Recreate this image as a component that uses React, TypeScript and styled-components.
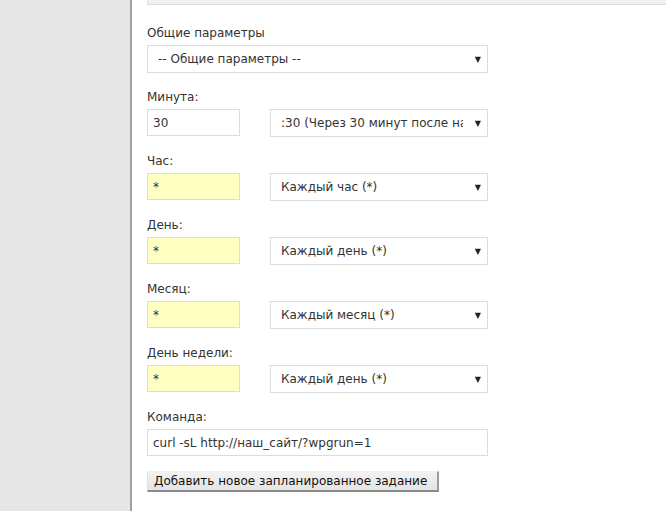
import styled, { createGlobalStyle } from "styled-components";

const GlobalStyle = createGlobalStyle`
  html, body {
    margin: 0;
    padding: 0;
    background: #e6e6e6;
  }
  body {
    font-family: "DejaVu Sans", Verdana, sans-serif;
    font-size: 12px;
    color: #333;
  }
`;

type SelectProps = { value: string; width: number };

function Dropdown({ value, width }: SelectProps) {
  return (
    <SelectWrap $width={width}>
      <NativeSelect defaultValue={value}>
        <option>{value}</option>
      </NativeSelect>
      <Arrow>▼</Arrow>
    </SelectWrap>
  );
}

const rows = [
  { label: "Минута:", value: "30", filled: false, option: ":30 (Через 30 минут после начала часа)" },
  { label: "Час:", value: "*", filled: true, option: "Каждый час (*)" },
  { label: "День:", value: "*", filled: true, option: "Каждый день (*)" },
  { label: "Месяц:", value: "*", filled: true, option: "Каждый месяц (*)" },
  { label: "День недели:", value: "*", filled: true, option: "Каждый день (*)" },
];

export default function App() {
  return (
    <>
      <GlobalStyle />
      <Page>
        <Gutter />
        <Panel>
          <TopBox />
          <Form>
            <Field>
              <Label>Общие параметры</Label>
              <Dropdown value="-- Общие параметры --" width={341} />
            </Field>

            {rows.map((r) => (
              <Field key={r.label}>
                <Label>{r.label}</Label>
                <Row>
                  <TextInput $width={93} $filled={r.filled} defaultValue={r.value} />
                  <Dropdown value={r.option} width={218} />
                </Row>
              </Field>
            ))}

            <Field>
              <Label>Команда:</Label>
              <TextInput $width={341} defaultValue="curl -sL http://наш_сайт/?wpgrun=1" />
            </Field>

            <SubmitButton type="button">Добавить новое запланированное задание</SubmitButton>
          </Form>
        </Panel>
      </Page>
    </>
  );
}

const Page = styled.div`
  display: flex;
  width: 666px;
  height: 511px;
  overflow: hidden;
`;

const Gutter = styled.div`
  width: 130px;
  flex-shrink: 0;
  background: #e6e6e6;
`;

const Panel = styled.div`
  flex: 1;
  background: #fff;
  border-left: 2px solid #a0a0a0;
  padding: 0 0 0 15px;
`;

const TopBox = styled.div`
  height: 4px;
  background: #f1f1f1;
  border: 1px solid #dcdcdc;
  border-top: none;
  border-right: none;
`;

const Form = styled.div`
  display: flex;
  flex-direction: column;
  padding-top: 19px;
`;

const Field = styled.div`
  display: flex;
  flex-direction: column;
  margin-bottom: 15px;
`;

const Label = styled.div`
  font-size: 12px;
  line-height: 18px;
  color: #333;
  margin-bottom: 3px;
`;

const Row = styled.div`
  display: flex;
  gap: 30px;
  align-items: flex-start;
`;

const TextInput = styled.input<{ $width: number; $filled?: boolean }>`
  box-sizing: border-box;
  width: ${(p) => p.$width}px;
  height: 27px;
  margin: 0;
  padding: 0 5px;
  border: 1px solid #dcdcdc;
  background: ${(p) => (p.$filled ? "#ffffc2" : "#fff")};
  font-family: "DejaVu Sans", Verdana, sans-serif;
  font-size: 12px;
  color: #333;
  outline: none;
`;

const SelectWrap = styled.div<{ $width: number }>`
  position: relative;
  width: ${(p) => p.$width}px;
  height: 28px;
`;

const NativeSelect = styled.select`
  appearance: none;
  box-sizing: border-box;
  width: 100%;
  height: 100%;
  margin: 0;
  padding: 0 24px 0 10px;
  border: 1px solid #dcdcdc;
  border-radius: 0;
  background: #fff;
  font-family: "DejaVu Sans", Verdana, sans-serif;
  font-size: 12px;
  color: #333;
  outline: none;
`;

const Arrow = styled.span`
  position: absolute;
  right: 7px;
  top: 50%;
  transform: translateY(-50%);
  font-size: 8px;
  color: #222;
  pointer-events: none;
`;

const SubmitButton = styled.button`
  align-self: flex-start;
  margin: 0;
  height: 21px;
  padding: 0 10px 0 6px;
  background: linear-gradient(#f2f2f2, #e4e4e4);
  border-style: solid;
  border-color: #f0f0f0 #9a9a9a #8a8a8a #e0e0e0;
  border-width: 1px 2px 2px 1px;
  font-family: "DejaVu Sans", Verdana, sans-serif;
  font-size: 12px;
  color: #111;
`;
